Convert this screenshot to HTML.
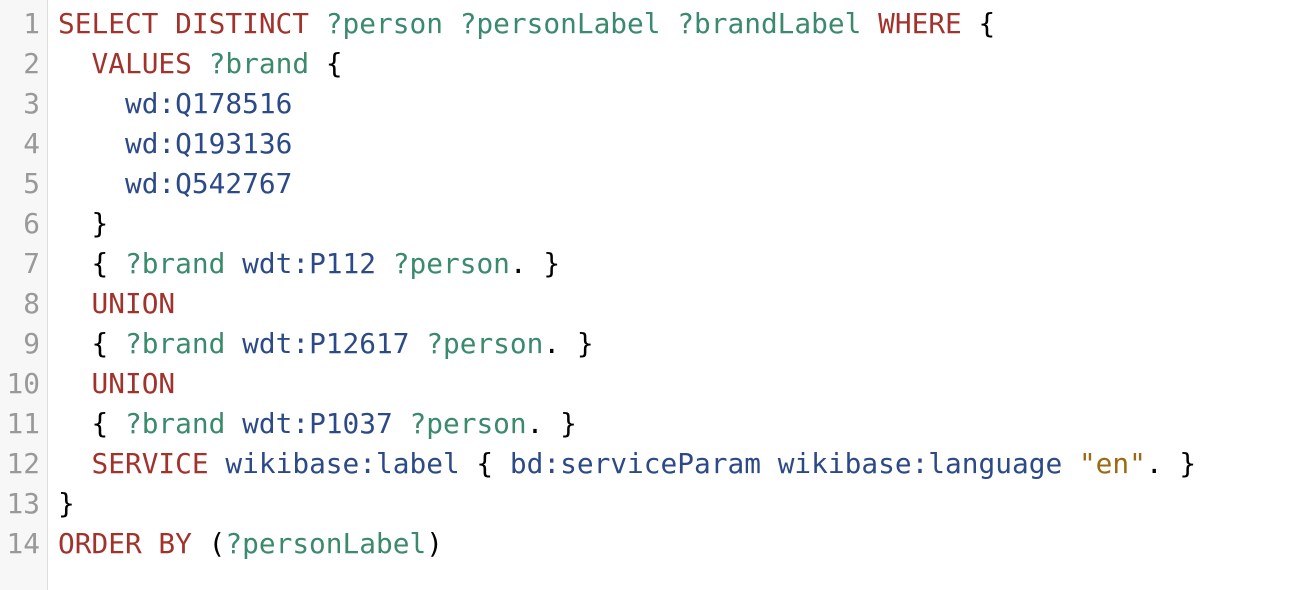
<!DOCTYPE html>
<html><head><meta charset="utf-8"><style>
body{margin:0;background:#fff;width:1310px;height:590px;overflow:hidden;font-family:"DejaVu Sans Mono","Liberation Mono",monospace;font-size:27.8px;}
.g{position:absolute;left:0;top:0;width:47px;height:590px;background:#f7f7f7;border-right:1px solid #ddd;}
.ln{position:absolute;left:0;width:40px;text-align:right;color:#999;}
.c{position:absolute;left:58px;white-space:pre;color:#000;}
.k{color:#a1322c}.v{color:#3b8a6b}.p{color:#2c4a87}.s{color:#9b6a12}
</style></head><body>
<div class="g"></div>
<div style="position:absolute;left:0;top:4px;line-height:40px;">
<div class="ln" style="top:0">1</div><div class="ln" style="top:40px">2</div><div class="ln" style="top:80px">3</div><div class="ln" style="top:120px">4</div><div class="ln" style="top:160px">5</div><div class="ln" style="top:200px">6</div><div class="ln" style="top:240px">7</div><div class="ln" style="top:280px">8</div><div class="ln" style="top:320px">9</div><div class="ln" style="top:360px">10</div><div class="ln" style="top:400px">11</div><div class="ln" style="top:440px">12</div><div class="ln" style="top:480px">13</div><div class="ln" style="top:520px">14</div>
<div class="c" style="top:0"><span class="k">SELECT DISTINCT</span> <span class="v">?person</span> <span class="v">?personLabel</span> <span class="v">?brandLabel</span> <span class="k">WHERE</span> {</div>
<div class="c" style="top:40px">  <span class="k">VALUES</span> <span class="v">?brand</span> {</div>
<div class="c" style="top:80px">    <span class="p">wd:Q178516</span></div>
<div class="c" style="top:120px">    <span class="p">wd:Q193136</span></div>
<div class="c" style="top:160px">    <span class="p">wd:Q542767</span></div>
<div class="c" style="top:200px">  }</div>
<div class="c" style="top:240px">  { <span class="v">?brand</span> <span class="p">wdt:P112</span> <span class="v">?person</span>. }</div>
<div class="c" style="top:280px">  <span class="k">UNION</span></div>
<div class="c" style="top:320px">  { <span class="v">?brand</span> <span class="p">wdt:P12617</span> <span class="v">?person</span>. }</div>
<div class="c" style="top:360px">  <span class="k">UNION</span></div>
<div class="c" style="top:400px">  { <span class="v">?brand</span> <span class="p">wdt:P1037</span> <span class="v">?person</span>. }</div>
<div class="c" style="top:440px">  <span class="k">SERVICE</span> <span class="p">wikibase:label</span> { <span class="p">bd:serviceParam</span> <span class="p">wikibase:language</span> <span class="s">"en"</span>. }</div>
<div class="c" style="top:480px">}</div>
<div class="c" style="top:520px"><span class="k">ORDER BY</span> (<span class="v">?personLabel</span>)</div>
</div>
</body></html>
